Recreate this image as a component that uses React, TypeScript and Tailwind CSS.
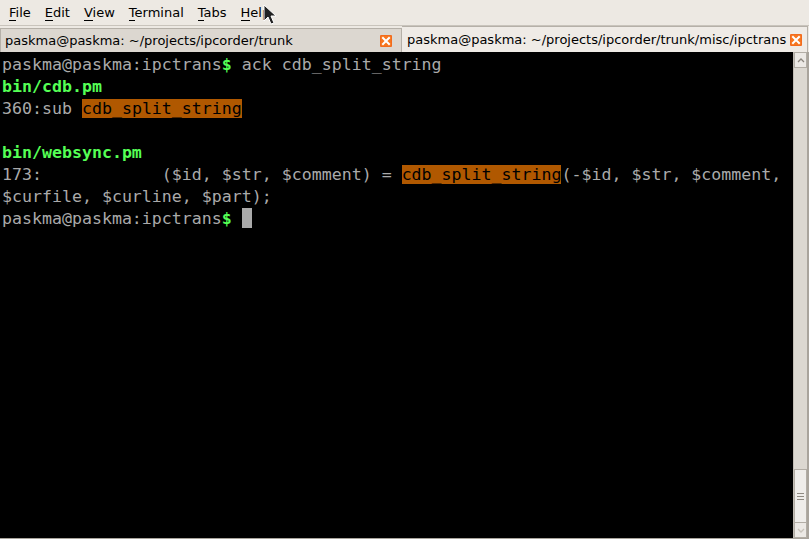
import React from "react";

const ui = { fontFamily: '"DejaVu Sans", sans-serif' };
const mono = { fontFamily: '"DejaVu Sans Mono", monospace' };

function Close() {
  return (
    <svg width="12" height="12" viewBox="0 0 12 12" className="shrink-0">
      <rect x="0" y="0" width="12" height="12" rx="1" fill="#f26b1d" />
      <rect x="1" y="1" width="10" height="10" fill="#f7761f" />
      <path d="M3 3 L9 9 M9 3 L3 9" stroke="#fff" strokeWidth="2" strokeLinecap="square" />
    </svg>
  );
}

function Hi({ children }: { children: React.ReactNode }) {
  return <span className="bg-[#b05800] text-black">{children}</span>;
}
function G({ children }: { children: React.ReactNode }) {
  return <span className="text-[#55ff55] font-bold">{children}</span>;
}

export default function App() {
  const menu = ["File", "Edit", "View", "Terminal", "Tabs", "Help"];
  return (
    <div className="w-[809px] h-[539px] bg-[#ede9e3] flex flex-col overflow-hidden relative" style={ui}>
      <div className="h-[25px] flex items-center pl-[9px] gap-[14px] text-[13px] text-black shrink-0">
        {menu.map((m) => (
          <span key={m}>
            <u className="no-underline border-b border-black leading-none">{m[0]}</u>
            {m.slice(1)}
          </span>
        ))}
      </div>
      <div className="h-[27px] flex shrink-0 border-t border-[#c9c4bc] bg-[#ede9e3]">
        <div className="w-[402px] mt-[2px] flex items-center justify-between pl-[4px] pr-[9px] bg-[#dcd7d0] border-l border-t border-r border-[#b5b0a8] text-[13px] text-black">
          <span>paskma@paskma: ~/projects/ipcorder/trunk</span>
          <Close />
        </div>
        <div className="flex-1 flex items-center justify-between pl-[5px] pr-[5px] bg-[#efebe6] border-t border-r border-[#b5b0a8] text-[13px] text-black mr-[1px]">
          <span>paskma@paskma: ~/projects/ipcorder/trunk/misc/ipctrans</span>
          <Close />
        </div>
      </div>
      <div className="flex-1 flex border-r-2 border-b border-[#a9a49c]">
        <div className="flex-1 bg-black text-[#aaaaaa] pl-[2px] pt-[2px] text-[16.6px] leading-[22px] whitespace-pre" style={mono}>
          <div>paskma@paskma:ipctrans<G>$</G> ack cdb_split_string</div>
          <div><G>bin/cdb.pm</G></div>
          <div>360:sub <Hi>cdb_split_string</Hi></div>
          <div>&nbsp;</div>
          <div><G>bin/websync.pm</G></div>
          <div>173:            ($id, $str, $comment) = <Hi>cdb_split_string</Hi>(-$id, $str, $comment,</div>
          <div>$curfile, $curline, $part);</div>
          <div>paskma@paskma:ipctrans<G>$</G>{" "}<span className="inline-block w-[10px] h-[20px] bg-[#aaaaaa] align-[-4px]"></span></div>
        </div>
        <div className="w-[14px] bg-[#dcd8d1] flex flex-col border-l border-[#c2bdb5]">
          <div className="h-[16px] bg-[#ece9e5] border border-[#b2ada5] flex items-center justify-center">
            <svg width="8" height="5" viewBox="0 0 8 5"><path d="M1 4 L4 1 L7 4" stroke="#8a857d" strokeWidth="1.3" fill="none" /></svg>
          </div>
          <div className="flex-1" />
          <div className="h-[54px] bg-[#efedea] border border-[#b2ada5] flex flex-col items-center justify-center gap-[2px]">
            <div className="w-[7px] h-px bg-[#8f8a82]" />
            <div className="w-[7px] h-px bg-[#8f8a82]" />
            <div className="w-[7px] h-px bg-[#8f8a82]" />
          </div>
          <div className="h-[15px] bg-[#ece9e5] border border-t-0 border-[#b2ada5] flex items-center justify-center">
            <svg width="8" height="5" viewBox="0 0 8 5"><path d="M1 1 L4 4 L7 1" stroke="#c8c3bb" strokeWidth="1.3" fill="none" /></svg>
          </div>
        </div>
      </div>
      <svg className="absolute left-[263px] top-[4px]" width="14" height="22" viewBox="0 0 14 22">
        <path d="M1 1 L1 17 L5 13 L8 20 L11 19 L8 12 L13 12 Z" fill="#222" stroke="#fff" strokeWidth="1" />
      </svg>
    </div>
  );
}
